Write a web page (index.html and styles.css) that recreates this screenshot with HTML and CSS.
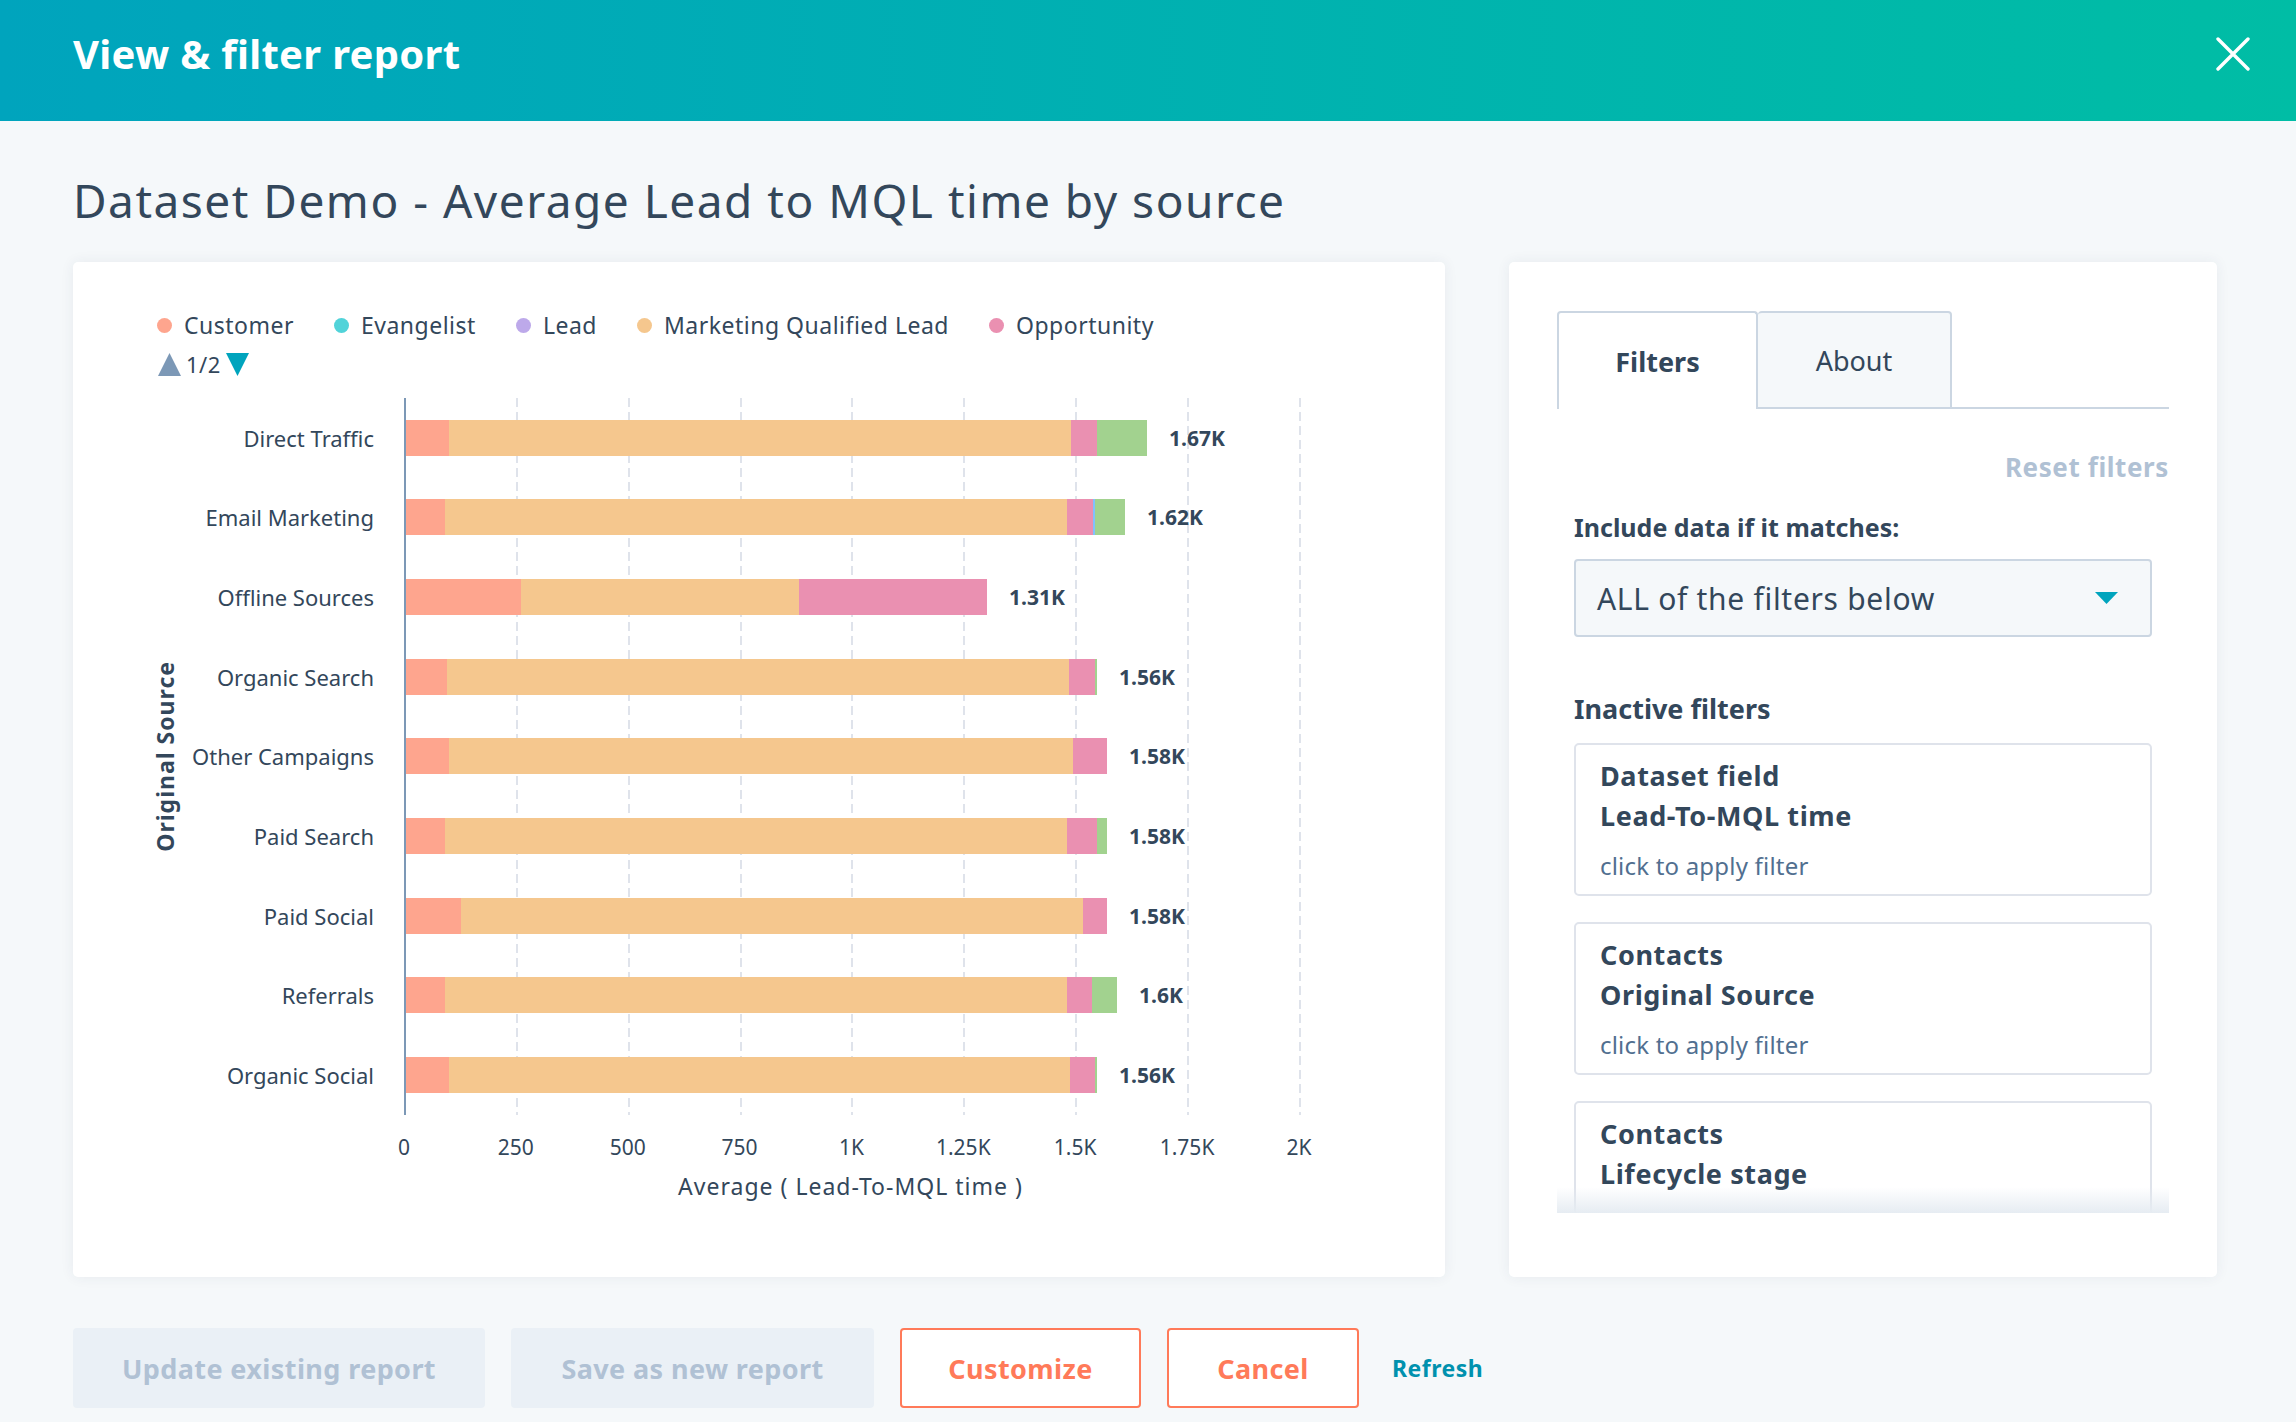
FILE: index.html
```html
<!DOCTYPE html>
<html lang="en">
<head>
<meta charset="utf-8">
<title>View &amp; filter report</title>
<link rel="stylesheet" href="styles.css">
</head>
<body>
<header class="topbar">
  <h2 class="topbar-title">View &amp; filter report</h2>
  <svg class="close" viewBox="0 0 34 34" width="34" height="34" aria-label="Close"><path d="M2 2L32 32M32 2L2 32" stroke="#fff" stroke-width="3.4" stroke-linecap="round"/></svg>
</header>
<main class="page">
  <h1 class="report-title">Dataset Demo - Average Lead to MQL time by source</h1>
  <div class="content">
    <section class="card chart-card">
      <div class="legend">
        <span class="legend-item"><i class="dot c-customer"></i>Customer</span>
        <span class="legend-item"><i class="dot c-evangelist"></i>Evangelist</span>
        <span class="legend-item"><i class="dot c-lead"></i>Lead</span>
        <span class="legend-item"><i class="dot c-mql"></i>Marketing Qualified Lead</span>
        <span class="legend-item"><i class="dot c-opp"></i>Opportunity</span>
      </div>
      <div class="pager">
        <svg width="23" height="23" viewBox="0 0 23 23"><path d="M11.5 0L23 23H0Z" fill="#7c98b6"/></svg>
        <span class="pager-text">1/2</span>
        <svg width="23" height="23" viewBox="0 0 23 23"><path d="M0 0H23L11.5 23Z" fill="#00a4bd"/></svg>
      </div>
      <div class="chart-body">
        <div class="y-title"><span>Original Source</span></div>
        <div class="cats">
          <span>Direct Traffic</span>
          <span>Email Marketing</span>
          <span>Offline Sources</span>
          <span>Organic Search</span>
          <span>Other Campaigns</span>
          <span>Paid Search</span>
          <span>Paid Social</span>
          <span>Referrals</span>
          <span>Organic Social</span>
        </div>
        <div class="plot-col">
          <div class="plot">
            <i class="grid" style="left:110px"></i>
            <i class="grid" style="left:222px"></i>
            <i class="grid" style="left:334px"></i>
            <i class="grid" style="left:445px"></i>
            <i class="grid" style="left:557px"></i>
            <i class="grid" style="left:669px"></i>
            <i class="grid" style="left:781px"></i>
            <i class="grid" style="left:893px"></i>
            <div class="rows">
              <div class="row"><b class="seg c-customer" style="width:43px"></b><b class="seg c-mql" style="width:622px"></b><b class="seg c-opp" style="width:26px"></b><b class="seg c-green" style="width:50px"></b><span class="val">1.67K</span></div>
              <div class="row"><b class="seg c-customer" style="width:39px"></b><b class="seg c-mql" style="width:622px"></b><b class="seg c-opp" style="width:26px"></b><b class="seg c-blue" style="width:2px"></b><b class="seg c-green" style="width:30px"></b><span class="val">1.62K</span></div>
              <div class="row"><b class="seg c-customer" style="width:115px"></b><b class="seg c-mql" style="width:278px"></b><b class="seg c-opp" style="width:188px"></b><span class="val">1.31K</span></div>
              <div class="row"><b class="seg c-customer" style="width:41px"></b><b class="seg c-mql" style="width:622px"></b><b class="seg c-opp" style="width:26px"></b><b class="seg c-green" style="width:2px"></b><span class="val">1.56K</span></div>
              <div class="row"><b class="seg c-customer" style="width:43px"></b><b class="seg c-mql" style="width:624px"></b><b class="seg c-opp" style="width:34px"></b><span class="val">1.58K</span></div>
              <div class="row"><b class="seg c-customer" style="width:39px"></b><b class="seg c-mql" style="width:622px"></b><b class="seg c-opp" style="width:30px"></b><b class="seg c-green" style="width:10px"></b><span class="val">1.58K</span></div>
              <div class="row"><b class="seg c-customer" style="width:55px"></b><b class="seg c-mql" style="width:622px"></b><b class="seg c-opp" style="width:24px"></b><span class="val">1.58K</span></div>
              <div class="row"><b class="seg c-customer" style="width:39px"></b><b class="seg c-mql" style="width:622px"></b><b class="seg c-opp" style="width:25px"></b><b class="seg c-green" style="width:25px"></b><span class="val">1.6K</span></div>
              <div class="row"><b class="seg c-customer" style="width:43px"></b><b class="seg c-mql" style="width:621px"></b><b class="seg c-opp" style="width:25px"></b><b class="seg c-green" style="width:2px"></b><span class="val">1.56K</span></div>
            </div>
          </div>
          <div class="ticks">
            <span>0</span><span>250</span><span>500</span><span>750</span><span>1K</span><span>1.25K</span><span>1.5K</span><span>1.75K</span><span>2K</span>
          </div>
          <div class="x-title">Average ( Lead-To-MQL time )</div>
        </div>
      </div>
    </section>
    <aside class="card filter-card">
      <div class="tabs">
        <div class="tab tab-active">Filters</div>
        <div class="tab tab-idle">About</div>
        <div class="tab-fill"></div>
      </div>
      <div class="reset-row"><span class="reset">Reset filters</span></div>
      <div class="scroll">
        <div class="field-label">Include data if it matches:</div>
        <div class="select">
          <span>ALL of the filters below</span>
          <svg width="23" height="12" viewBox="0 0 23 12"><path d="M0 0H23L11.5 12Z" fill="#00a4bd"/></svg>
        </div>
        <div class="section-label">Inactive filters</div>
        <div class="filter-list">
          <div class="filter">
            <div class="f-strong">Dataset field</div>
            <div class="f-strong">Lead-To-MQL time</div>
            <div class="f-hint">click to apply filter</div>
          </div>
          <div class="filter">
            <div class="f-strong">Contacts</div>
            <div class="f-strong">Original Source</div>
            <div class="f-hint">click to apply filter</div>
          </div>
          <div class="filter filter-last">
            <div class="f-strong">Contacts</div>
            <div class="f-strong">Lifecycle stage</div>
          </div>
        </div>
        <div class="fade"></div>
      </div>
    </aside>
  </div>
  <footer class="actions">
    <button class="btn btn-disabled btn-update">Update existing report</button>
    <button class="btn btn-disabled btn-save">Save as new report</button>
    <button class="btn btn-outline btn-customize">Customize</button>
    <button class="btn btn-outline btn-cancel">Cancel</button>
    <a class="refresh">Refresh</a>
  </footer>
</main>
</body>
</html>
```
FILE: styles.css
```css
* { box-sizing: border-box; }
html, body { margin: 0; padding: 0; }
body {
  background: #f5f8fa;
  color: #33475b;
  font-family: "Noto Sans", "DejaVu Sans", sans-serif;
  width: 2296px;
  height: 1422px;
  overflow: hidden;
}
.topbar {
  height: 121px;
  background: linear-gradient(90deg, #00a4bd 0%, #00bda5 100%);
  display: flex;
  align-items: center;
  justify-content: space-between;
  padding: 0 46px 13px 73px;
}
.topbar-title {
  margin: 0;
  color: #fff;
  font-size: 40px;
  font-weight: 700;
  letter-spacing: 0.3px;
  line-height: 1;
}
.close { display: block; }
.page { padding: 0 73px; }
.report-title {
  margin: 53px 0 0;
  font-size: 46px;
  font-weight: 400;
  letter-spacing: 1.5px;
  line-height: 53px;
  color: #33475b;
  white-space: nowrap;
}
.content {
  margin-top: 35px;
  display: flex;
  gap: 64px;
  height: 1015px;
}
.card {
  background: #fff;
  border-radius: 5px;
  box-shadow: 0 0 14px rgba(45, 62, 80, 0.07);
}
.chart-card {
  width: 1372px;
  padding: 48px 0 0 80px;
}
.legend {
  display: flex;
  align-items: center;
  gap: 40px;
  height: 30px;
  margin-left: 4px;
  font-size: 23px;
  letter-spacing: 0.5px;
  line-height: 30px;
}
.legend-item { display: flex; align-items: center; gap: 12px; }
.dot { width: 15px; height: 15px; border-radius: 50%; display: block; }
.c-customer { background: #fea58e; }
.c-evangelist { background: #51d3d9; }
.c-lead { background: #bda9ea; }
.c-mql { background: #f5c78e; }
.c-opp { background: #ea90b1; }
.c-green { background: #a2d28f; }
.c-blue { background: #81c1fd; }
.pager {
  display: flex;
  align-items: center;
  gap: 5px;
  height: 30px;
  margin: 9px 0 19px 5px;
  font-size: 22px;
  letter-spacing: 0.5px;
}
.pager svg { display: block; }
.chart-body { display: flex; align-items: flex-start; }
.y-title {
  width: 24px;
  height: 717px;
  display: flex;
  align-items: center;
  justify-content: center;
}
.y-title span {
  writing-mode: vertical-rl;
  transform: rotate(180deg);
  font-size: 23px;
  font-weight: 700;
  letter-spacing: 1px;
  white-space: nowrap;
}
.cats {
  width: 227px;
  height: 717px;
  padding-right: 30px;
  display: grid;
  grid-template-rows: repeat(9, 1fr);
  font-size: 22px;
}
.cats span {
  display: flex;
  align-items: center;
  justify-content: flex-end;
  white-space: nowrap;
}
.plot-col { width: 893px; }
.plot {
  position: relative;
  height: 717px;
  border-left: 2px solid #7c98b6;
}
.grid {
  position: absolute;
  top: 0;
  bottom: 0;
  width: 2px;
  background: repeating-linear-gradient(to bottom, #dfe3eb 0 9px, transparent 9px 14px);
}
.rows {
  position: relative;
  height: 100%;
  display: grid;
  grid-template-rows: repeat(9, 1fr);
}
.row { display: flex; align-items: center; }
.seg { display: block; height: 36px; flex: none; }
.val {
  margin-left: 22px;
  font-size: 21px;
  font-weight: 700;
  white-space: nowrap;
}
.ticks {
  display: flex;
  margin: 17px 0 0 -56px;
  height: 30px;
  line-height: 30px;
  font-size: 21px;
}
.ticks span { width: 111.875px; flex: none; text-align: center; }
.x-title {
  margin-top: 9px;
  text-align: center;
  font-size: 23px;
  letter-spacing: 1px;
  line-height: 30px;
}
.filter-card {
  width: 708px;
  padding: 49px 48px 64px;
  display: flex;
  flex-direction: column;
}
.tabs { display: flex; height: 98px; }
.tab {
  display: flex;
  align-items: center;
  justify-content: center;
  font-size: 27px;
  border: 2px solid #cbd6e2;
  border-radius: 4px 4px 0 0;
}
.tab-active {
  width: 201px;
  border-bottom: none;
  font-weight: 700;
  background: #fff;
}
.tab-idle {
  width: 194px;
  border-left: none;
  background: #f5f8fa;
}
.tab-fill { flex: 1; border-bottom: 2px solid #cbd6e2; }
.reset-row {
  margin-top: 42px;
  display: flex;
  justify-content: flex-end;
  line-height: 32px;
}
.reset { color: #b0c1d4; font-weight: 700; font-size: 26px; letter-spacing: 0.6px; }
.scroll {
  position: relative;
  flex: 1;
  overflow: hidden;
  padding: 0 17px;
}
.field-label, .section-label {
  font-weight: 700;
  line-height: 34px;
}
.field-label { margin-top: 27px; font-size: 25px; }
.select {
  margin-top: 15px;
  height: 78px;
  border: 2px solid #cbd6e2;
  border-radius: 4px;
  background: #f5f8fa;
  display: flex;
  align-items: center;
  justify-content: space-between;
  padding: 0 32px 0 21px;
  font-size: 30px;
  letter-spacing: 0.7px;
}
.select svg { display: block; }
.section-label { margin-top: 55px; font-size: 27px; }
.filter-list {
  margin-top: 17px;
  display: flex;
  flex-direction: column;
  gap: 26px;
}
.filter {
  border: 2px solid #dfe3eb;
  border-radius: 5px;
  padding: 11px 24px 8px;
}
.filter-last { min-height: 153px; }
.f-strong { font-size: 27px; font-weight: 700; letter-spacing: 0.6px; line-height: 40px; }
.f-hint { margin-top: 10px; font-size: 24px; letter-spacing: 0.2px; line-height: 40px; color: #516f90; }
.fade {
  position: absolute;
  left: 0;
  right: 0;
  bottom: 0;
  height: 26px;
  background: linear-gradient(to bottom, rgba(245, 248, 250, 0), #e6ecf2);
}
.actions {
  margin-top: 51px;
  display: flex;
  align-items: center;
  gap: 26px;
}
.btn {
  height: 80px;
  border-radius: 4px;
  font-family: inherit;
  font-size: 27px;
  font-weight: 700;
  letter-spacing: 0.4px;
  padding: 0;
  text-align: center;
}
.btn-update { width: 412px; }
.btn-save { width: 363px; }
.btn-customize { width: 241px; }
.btn-cancel { width: 192px; }
.btn-disabled {
  background: #eaf0f6;
  border: 2px solid #eaf0f6;
  color: #b0c1d4;
}
.btn-outline {
  background: #fff;
  border: 2px solid #ff7a59;
  color: #ff7a59;
}
.refresh {
  margin-left: 7px;
  color: #0091ae;
  font-weight: 700;
  font-size: 23px;
  letter-spacing: 0.5px;
}
```
